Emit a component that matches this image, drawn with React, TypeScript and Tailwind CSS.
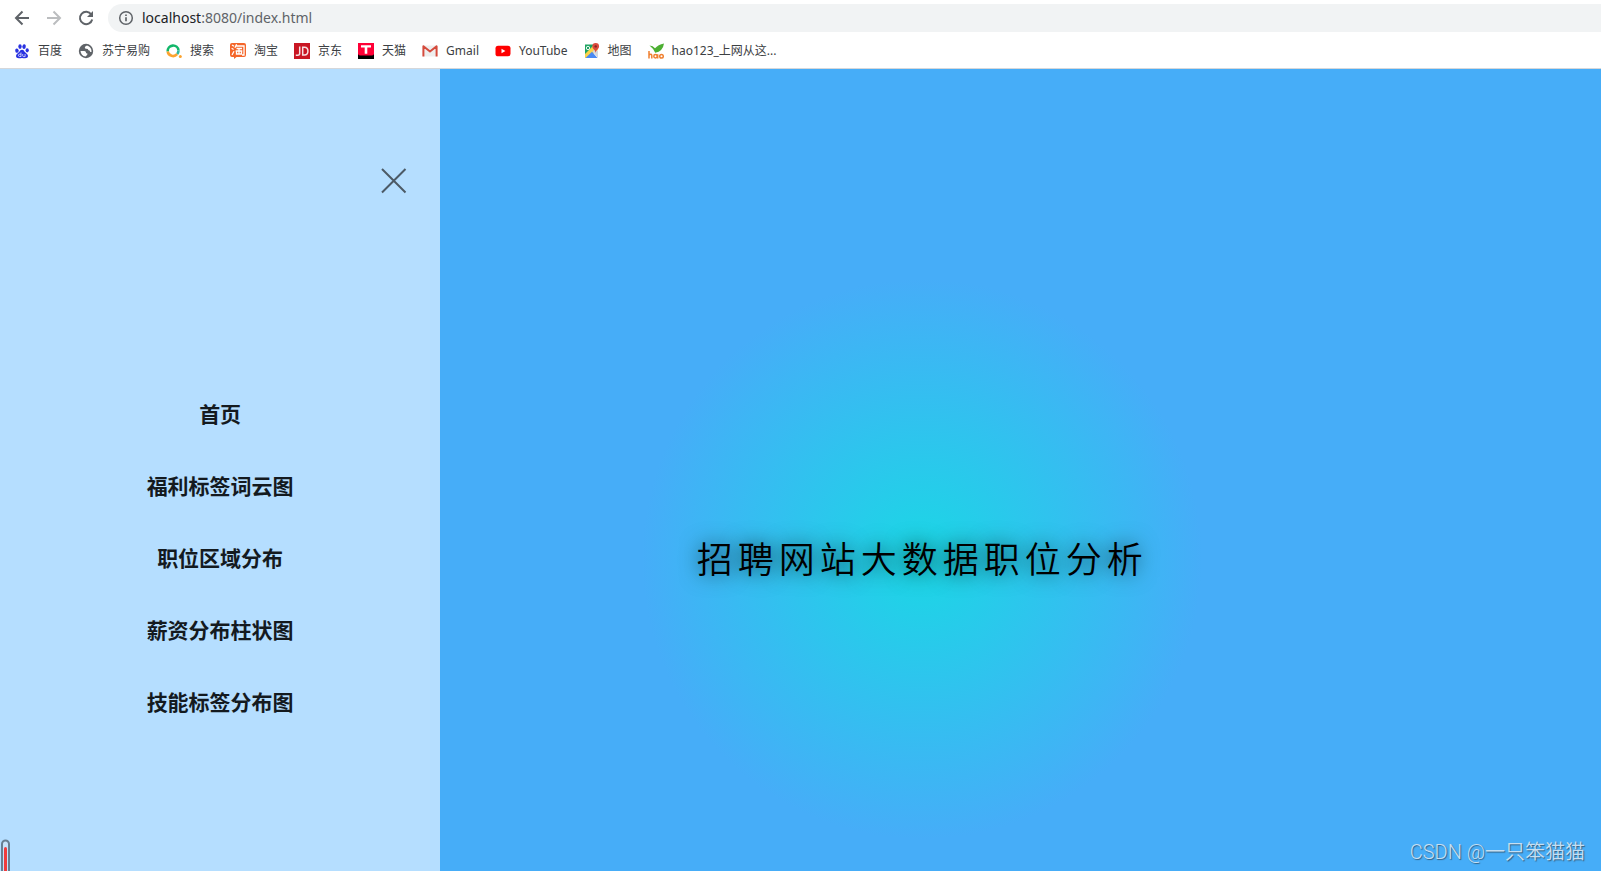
import { useState } from "react";
import type { ReactNode } from "react";

const paw = (
  <svg viewBox="0 0 16 16" className="size-4 shrink-0" aria-hidden="true">
    <g fill="#2932e1">
      <ellipse cx="2.9" cy="7.6" rx="1.7" ry="2.2" transform="rotate(-10 2.9 7.6)" />
      <ellipse cx="6" cy="3.6" rx="1.7" ry="2.3" />
      <ellipse cx="10.1" cy="3.6" rx="1.7" ry="2.3" transform="rotate(10 10 3.6)" />
      <ellipse cx="13.2" cy="7.3" rx="1.6" ry="2.1" />
      <path d="M8 6.800c1.700 0 2.100 1.400 3.100 2.500 1.100 1.100 2.900 2 2.900 3.700 0 1.700-1.300 2.200-2.900 2.200-1.200 0-2-.3-3.100-.3s-1.900.3-3.100.3c-1.600 0-2.900-.6-2.900-2.200 0-1.700 1.800-2.600 2.900-3.700C6 8.200 6.300 6.800 8 6.800Z" />
    </g>
    <g fill="none" stroke="#fff" strokeWidth="0.7">
      <path d="M7 9.500v4.200M7 11.200H5.600a1 1 0 0 0 0 2.300H7" />
      <path d="M8.700 11v1.700q0 .9.900.9h1.500V11" />
    </g>
  </svg>
);

const globe = (
  <svg viewBox="0 0 16 16" className="size-4 shrink-0" aria-hidden="true">
    <circle cx="8" cy="8" r="7.200" fill="#5f6368" />
    <path
      d="M2.500 8h3.800q1.700.1 1.700 1.400v.8h1.300v1.500L7.500 13.500Q3 12.800 2.500 8ZM9 2.600Q6.600 3.500 6.800 4.700q.2.900 1.400 1.100l1.600.2q.4 1.600 1.700 1.600l.8 1.300 1.200.1Q13.900 4.200 9 2.600Z"
      fill="#fff"
    />
  </svg>
);

const ring = (
  <svg viewBox="0 0 16 16" className="size-4 shrink-0" aria-hidden="true">
    <g fill="none" strokeWidth="2.600">
      <path d="M1.700 8.500A5.400 5.400 0 0 1 12.500 7.500" stroke="#12b76a" />
      <path d="M12.500 7.500a5.400 5.400 0 0 1-1.400 3.700" stroke="#2fb8a0" />
      <path d="M11.100 11.200A5.400 5.400 0 0 1 1.700 8.500" stroke="#fca32f" />
    </g>
    <circle cx="14.300" cy="13.400" r="1.500" fill="#fca32f" />
  </svg>
);

const taobao = (
  <svg viewBox="0 0 16 16" className="size-4 shrink-0" aria-hidden="true">
    <path d="M2 0h12q2 0 2 2v10q0 2-2 2H6.500L4 16v-2H2q-2 0-2-2V2Q0 0 2 0Z" fill="#f4662a" />
    <g fill="none" stroke="#fff" strokeWidth="1.300">
      <path d="m2 2 2 1.300M1.600 5.300l2 1.200M2 12l2-3.800M6.600 1.300 4.900 4.800M6 3h8v9h-2M6.500 5.500h5.500M5.600 8h6.700M9 5.500v5.300M6.500 8.800v2.200h5V8.800" />
    </g>
  </svg>
);

const jd = (
  <svg viewBox="0 0 16 16" className="size-4 shrink-0" aria-hidden="true">
    <path d="M0 0h16v16H0z" fill="#c91623" />
    <path d="M5.700 3.500v6.800q0 2-2 2H1.800M8.700 4.200h1.800q3.400 0 3.400 3.900t-3.400 4H8.700Z" fill="none" stroke="#f7dfe1" strokeWidth="1.500" />
  </svg>
);

const tmall = (
  <svg viewBox="0 0 16 16" className="size-4 shrink-0" aria-hidden="true">
    <path d="M0 0h16v16H0z" fill="#000" />
    <path d="M0 0h16v10.500q0 2-2 2H2q-2 0-2-2Z" fill="#ff0036" />
    <path d="M3 2.200h10v2.200H9.300v6.400H6.700V4.400H3Z" fill="#fff" />
  </svg>
);

const gmail = (
  <svg viewBox="0 0 16 16" className="size-4 shrink-0" aria-hidden="true">
    <path d="M1 2.500h14v11H1z" fill="#eee" />
    <path d="M1.400 13.500V3.300L8 8.500l6.600-5.200v10.200" fill="none" stroke="#d54b3d" strokeWidth="2" strokeLinejoin="round" />
  </svg>
);

const youtube = (
  <svg viewBox="0 0 16 16" className="size-4 shrink-0" aria-hidden="true">
    <rect x="0.500" y="2.700" width="15" height="10.600" rx="2.600" fill="#f00" />
    <path d="M6.500 5.800v4.400L10.400 8Z" fill="#fff" />
  </svg>
);

const maps = (
  <svg viewBox="0 0 16 16" className="size-4 shrink-0" aria-hidden="true">
    <path d="M1 1.500h9L2 13.500H1Z" fill="#1ea362" />
    <path d="M1 11 10.500 1.500 14 5v2L4 15H1Z" fill="#fbd34b" />
    <path d="M1.500 15 8 8.700l5.500 6.300Z" fill="#4a89f3" />
    <path d="m8.500 8.500 2-2L14 8v7Z" fill="#d5d8dc" />
    <circle cx="4" cy="5" r="1.700" fill="none" stroke="#fff" strokeWidth="0.900" />
    <path d="M11.700 0a3.400 3.400 0 0 1 3.400 3.400c0 2.300-2.900 3.200-3.400 6.400-.5-3.200-3.400-4.100-3.400-6.400A3.400 3.400 0 0 1 11.700 0Z" fill="#dc4b3e" />
    <circle cx="11.700" cy="3.400" r="1.200" fill="#832820" />
  </svg>
);

const hao = (
  <svg viewBox="0 0 16 16" className="size-4 shrink-0" aria-hidden="true">
    <path d="M1.500 2.500Q5 2.500 7 5.300 10 1.500 16 .4 15 8 7.200 9.800 5.500 5.500 1.500 2.500Z" fill="#4caf32" />
    <g fill="none" stroke="#f08030" strokeWidth="1.500">
      <path d="M1 8v7.500M1 12q2.800-1.700 2.800.7v2.800" />
      <circle cx="7.500" cy="13.300" r="1.700" />
      <path d="M9.700 11.300v4.200" />
      <circle cx="13.500" cy="13.300" r="1.800" />
    </g>
  </svg>
);

const bookmarks: { label: string; icon: ReactNode }[] = [
  { label: "百度", icon: paw },
  { label: "苏宁易购", icon: globe },
  { label: "搜索", icon: ring },
  { label: "淘宝", icon: taobao },
  { label: "京东", icon: jd },
  { label: "天猫", icon: tmall },
  { label: "Gmail", icon: gmail },
  { label: "YouTube", icon: youtube },
  { label: "地图", icon: maps },
  { label: "hao123_上网从这...", icon: hao },
];

const menu = ["首页", "福利标签词云图", "职位区域分布", "薪资分布柱状图", "技能标签分布图"];

function Toolbar() {
  return (
    <div className="flex items-center pt-1 pl-3">
      <button type="button" aria-label="Back" className="flex size-5 items-center justify-center text-[#5f6368]">
        <svg viewBox="0 0 20 20" className="size-5" fill="none" stroke="currentColor" strokeWidth="2">
          <path d="M17 10H4M10.500 3.500 4 10l6.500 6.500" />
        </svg>
      </button>
      <button type="button" aria-label="Forward" className="ml-3 flex size-5 items-center justify-center text-[#bbbdbf]">
        <svg viewBox="0 0 20 20" className="size-5" fill="none" stroke="currentColor" strokeWidth="2">
          <path d="M3 10h13M9.500 3.500 16 10l-6.500 6.500" />
        </svg>
      </button>
      <button type="button" aria-label="Reload" className="ml-3 flex size-5 items-center justify-center text-[#5f6368]">
        <svg viewBox="0 0 20 20" className="size-5" fill="none" stroke="currentColor" strokeWidth="2">
          <path d="M15.300 6.500A6.200 6.200 0 1 0 16.200 11.500" />
          <path d="M17 3v6h-6Z" fill="currentColor" stroke="none" />
        </svg>
      </button>
      <div className="ml-3 flex h-7 flex-1 items-center gap-2 rounded-l-full bg-[#f1f3f4] pl-[10px]">
        <svg viewBox="0 0 16 16" className="size-4 shrink-0" fill="none" stroke="#5f6368" strokeWidth="1.500" aria-hidden="true">
          <circle cx="8" cy="8" r="6.300" />
          <path d="M8 7.200v4M8 4.500v1.500" strokeWidth="1.700" />
        </svg>
        <a href="#top" className="text-sm leading-5 text-[#5f6368]">
          <span className="text-[#202124]">localhost</span>:8080/index.html
        </a>
      </div>
    </div>
  );
}

export default function App() {
  const [open, setOpen] = useState(true);
  return (
    <div className="flex min-h-screen flex-col overflow-hidden bg-white font-['Noto_Sans','Noto_Sans_CJK_SC',sans-serif]">
      <header className="border-b border-[#d5d7da]">
        <Toolbar />
        <nav aria-label="Bookmarks" className="flex h-9 items-center gap-4 pt-[2px] pl-[14px]">
          {bookmarks.map((b) => (
            <a key={b.label} href="#top" className="flex items-center gap-2 text-xs leading-4 whitespace-nowrap text-[#3c4043]">
              {b.icon}
              {b.label}
            </a>
          ))}
        </nav>
      </header>
      <div className="flex flex-1 bg-[#46adf8]">
        {open && (
          <aside className="relative flex w-[27.5%] flex-col bg-[#b5deff]">
            <div className="flex justify-end pt-24 pr-[30px]">
              <button type="button" aria-label="关闭" onClick={() => setOpen(false)} className="size-8">
                <svg viewBox="0 0 32 32" className="size-8" fill="none" stroke="#4c5a66" strokeWidth="2">
                  <path d="M4 4 27.500 27.500M27.500 4 4 27.500" />
                </svg>
              </button>
            </div>
            <nav className="mt-[201px] flex flex-col items-center gap-10">
              {menu.map((m) => (
                <a key={m} href="#top" className="text-[21px] leading-8 font-bold text-[#141a1f]">
                  {m}
                </a>
              ))}
            </nav>
            <svg viewBox="0 0 10 33" className="absolute bottom-0 left-0 h-[33px] w-[10px]" aria-hidden="true">
              <path d="M2 34V6a3.500 3.500 0 0 1 7 0v28" fill="#c6e3fb" stroke="#687f92" strokeWidth="2" />
              <path d="M5.500 34V10.500" stroke="#f03c3c" strokeWidth="3" strokeLinecap="round" />
            </svg>
          </aside>
        )}
        <main className="relative flex flex-1 items-start justify-center pt-[210px] pr-[12.3%]">
          <div className="flex size-[560px] shrink-0 items-center justify-center bg-[radial-gradient(circle_closest-side,#1bd7e5,#46adf8)] pb-1">
            <h1 className="font-['Noto_Sans_CJK_SC',sans-serif] text-4xl font-[350] tracking-[5px] whitespace-nowrap text-black [text-shadow:0_0_20px_rgba(0,0,0,0.75)]">
              招聘网站大数据职位分析
            </h1>
          </div>
          <p className="absolute right-4 bottom-[5px] font-['Roboto','Noto_Sans_CJK_SC',sans-serif] text-xl leading-7 font-[350] text-[#c5dff3] [text-shadow:1px_1px_1px_#35607f]">
            CSDN @一只笨猫猫
          </p>
        </main>
      </div>
    </div>
  );
}
